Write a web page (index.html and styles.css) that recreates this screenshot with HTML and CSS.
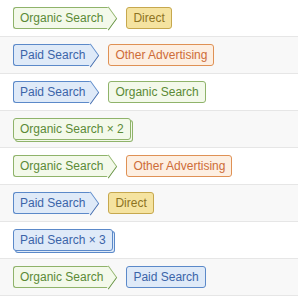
FILE: index.html
```html
<!DOCTYPE html>
<html lang="en">
<head>
  <meta charset="UTF-8">
  <title>Channel Paths</title>
  <link rel="stylesheet" href="styles.css">
</head>
<body>

  <ul class="paths">
    <li class="path">
      <span class="tag organic step">Organic Search</span>
      <span class="tag direct">Direct</span>
    </li>
    <li class="path">
      <span class="tag paid step">Paid Search</span>
      <span class="tag other">Other Advertising</span>
    </li>
    <li class="path">
      <span class="tag paid step">Paid Search</span>
      <span class="tag organic">Organic Search</span>
    </li>
    <li class="path">
      <span class="tag organic stack">Organic Search &times; 2</span>
    </li>
    <li class="path">
      <span class="tag organic step">Organic Search</span>
      <span class="tag other">Other Advertising</span>
    </li>
    <li class="path">
      <span class="tag paid step">Paid Search</span>
      <span class="tag direct">Direct</span>
    </li>
    <li class="path">
      <span class="tag paid stack">Paid Search &times; 3</span>
    </li>
    <li class="path">
      <span class="tag organic step">Organic Search</span>
      <span class="tag paid">Paid Search</span>
    </li>
  </ul>

</body>
</html>
```

FILE: styles.css
```css
* {
  box-sizing: border-box;
}

body {
  margin: 0;
  background: #fff;
  font-family: 'Liberation Sans', Arial, sans-serif;
  font-size: 12px;
}

.paths {
  list-style: none;
  margin: 0;
  padding: 0;
}

.path {
  display: flex;
  align-items: center;
  height: 37px;
  padding: 0 13px;
  border-bottom: 1px solid #e6e6e6;
}

.path:nth-child(even) {
  background: #f8f8f8;
}

.tag {
  position: relative;
  display: inline-block;
  height: 22px;
  line-height: 20px;
  padding: 0 6px;
  border: 1px solid;
  border-radius: 3px;
  white-space: nowrap;
}

.organic {
  background: #f3f9ea;
  border-color: #8fb36a;
  color: #5b8a36;
}

.paid {
  background: #dfeaf8;
  border-color: #5b89c9;
  color: #3b64a8;
}

.other {
  background: #fdefe2;
  border-color: #df9155;
  color: #cd6c38;
}

.direct {
  background: #f5e3a0;
  border-color: #c6a84e;
  color: #8d7322;
}

/* arrow pointing to the next channel */
.step {
  z-index: 0;
  border-right: none;
  border-radius: 3px 0 0 3px;
  margin-right: 17px;
}

.step::after {
  content: "";
  position: absolute;
  z-index: -1;
  top: 2px;
  right: -8px;
  width: 16px;
  height: 16px;
  background: inherit;
  border-top: 1px solid;
  border-right: 1px solid;
  border-color: inherit;
  transform: scaleX(0.72) rotate(45deg);
}

/* repeated channel: stacked card look */
.organic.stack {
  box-shadow: 2px 2px 0 -1px #f3f9ea, 2px 2px 0 0 #8fb36a;
}

.paid.stack {
  box-shadow: 2px 2px 0 -1px #dfeaf8, 2px 2px 0 0 #5b89c9;
}
```
